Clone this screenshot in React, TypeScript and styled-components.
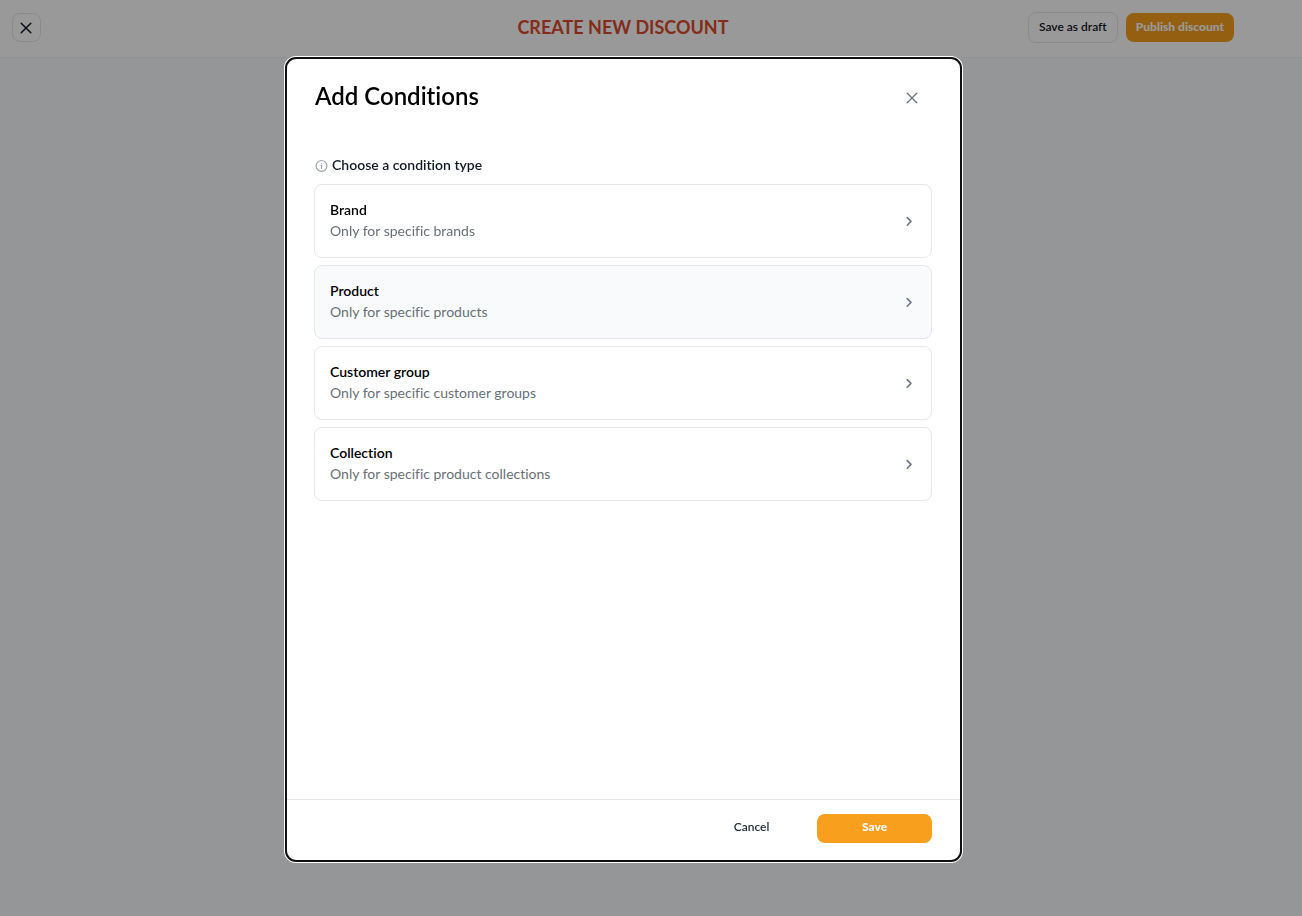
import React from "react";
import styled, { createGlobalStyle } from "styled-components";

const GlobalStyle = createGlobalStyle`
  *, *::before, *::after { box-sizing: border-box; }
  body {
    margin: 0;
    background: #f9fafe;
    color: #111827;
    font-family: Lato, "Noto Sans", sans-serif;
    font-variant-ligatures: no-common-ligatures;
  }
  h1, h2, h3, p, ul { margin: 0; padding: 0; }
  button { font-family: inherit; font-variant-ligatures: inherit; cursor: pointer; }
`;

const Page = styled.div`
  min-height: 100vh;
  background: #f9fafe;
`;

const TopBar = styled.header`
  display: grid;
  grid-template-columns: 1fr auto 1fr;
  align-items: center;
  height: 58px;
  padding: 0 68px 3px 12px;
  background: #ffffff;
  border-bottom: 1px solid #f0f0fa;
`;

const PageTitle = styled.h1`
  color: #dc4a2c;
  font-size: 18px;
  line-height: 24px;
  font-weight: 700;
`;

const Actions = styled.div`
  display: flex;
  align-items: center;
  justify-content: flex-end;
  gap: 8px;
`;

const Button = styled.button<{ $kind: "outline" | "primary" | "ghost"; $width?: number }>`
  height: ${({ $kind }) => ($kind === "outline" ? 31 : 29)}px;
  width: ${({ $width }) => ($width ? `${$width}px` : "auto")};
  padding: ${({ $width }) => ($width ? "0 10px 3px" : "0 10px 1px")};
  border: ${({ $kind }) => ($kind === "outline" ? "1px solid #e5e7eb" : "0")};
  border-radius: 8px;
  background: ${({ $kind }) => ($kind === "primary" ? "#f89f1e" : "transparent")};
  color: ${({ $kind }) => ($kind === "primary" ? "#ffffff" : $kind === "ghost" ? "#1f2937" : "#111827")};
  font-size: 12px;
  line-height: 16px;
  font-weight: ${({ $kind }) => ($kind === "primary" ? 900 : 600)};
  white-space: nowrap;
`;

const SquareButton = styled.button`
  display: flex;
  align-items: center;
  justify-content: center;
  width: 29px;
  height: 29px;
  padding: 1px 1px 0 0;
  border: 1px solid #e5e7eb;
  border-radius: 8px;
  background: transparent;
  color: #111827;
`;

const Overlay = styled.div`
  position: fixed;
  inset: 0;
  display: flex;
  justify-content: center;
  padding: 58px 55px 55px 0;
  background: rgba(0, 0, 0, 0.4);
`;

const Dialog = styled.section`
  display: flex;
  flex-direction: column;
  width: 100%;
  max-width: 675px;
  border-radius: 10px;
  background: #ffffff;
  outline: 2px solid #101010;
  outline-offset: -1px;
  box-shadow: 0 0 0 2px #ffffff;
`;

const DialogHeader = styled.div`
  display: flex;
  justify-content: space-between;
  align-items: flex-start;
  padding: 22px 43px 0 29px;
`;

const DialogTitle = styled.h2`
  color: #000000;
  font-size: 24px;
  line-height: 32px;
  font-weight: 600;
`;

const IconButton = styled.button`
  display: flex;
  margin-top: 12px;
  padding: 0;
  border: 0;
  background: transparent;
  color: #6b7280;
`;

const DialogBody = styled.div`
  flex: 1;
  overflow-y: auto;
  padding: 41px 29px 0 28px;
`;

const SectionLabel = styled.h3`
  display: flex;
  align-items: center;
  gap: 4px;
  padding-left: 1px;
  font-size: 14px;
  line-height: 24px;
  font-weight: 600;
`;

const ConditionList = styled.ul`
  display: flex;
  flex-direction: column;
  gap: 7px;
  margin-top: 7px;
  list-style: none;
`;

const ConditionCard = styled.button<{ $active?: boolean }>`
  display: flex;
  align-items: center;
  justify-content: space-between;
  width: 100%;
  height: 74px;
  padding: 0 16px 0 15px;
  border: 1px solid #e5e7eb;
  border-radius: 8px;
  background: ${({ $active }) => ($active ? "#f9fafb" : "#ffffff")};
  color: #6b7280;
  text-align: left;
`;

const CardText = styled.span`
  display: flex;
  flex-direction: column;
  padding-bottom: 2px;
  font-size: 14px;
  line-height: 21px;
`;

const CardTitle = styled.span`
  color: #000000;
  font-weight: 600;
`;

const CardDetail = styled.span`
  color: #687076;
`;

const DialogFooter = styled.footer`
  display: flex;
  align-items: center;
  justify-content: flex-end;
  gap: 8px;
  height: 62px;
  padding: 0 29px 4px 28px;
  border-top: 1px solid #e5e7eb;
`;

const Cross = ({ size, stroke }: { size: number; stroke: number }) => (
  <svg width={size} height={size} viewBox="0 0 12 12" fill="none" stroke="currentColor" strokeWidth={stroke} strokeLinecap="round" aria-hidden="true">
    <path d="M1.2 1.2L10.8 10.8M10.8 1.2L1.2 10.8" />
  </svg>
);

const Chevron = () => (
  <svg width="12" height="12" viewBox="0 0 12 12" fill="none" stroke="currentColor" strokeWidth="1.5" strokeLinecap="round" strokeLinejoin="round" aria-hidden="true">
    <path d="M4.2 2.6L8 6.4L4.2 10.2" />
  </svg>
);

const Info = () => (
  <svg width="13" height="13" viewBox="0 0 13 13" fill="none" stroke="#9ca3af" strokeWidth="1.2" strokeLinecap="round" aria-hidden="true">
    <circle cx="6.5" cy="6.9" r="5.4" />
    <path d="M6 6.4H6.5V9.4M6.5 4.3V4.4" />
  </svg>
);

const conditions = [
  { title: "Brand", detail: "Only for specific brands" },
  { title: "Product", detail: "Only for specific products", active: true },
  { title: "Customer group", detail: "Only for specific customer groups" },
  { title: "Collection", detail: "Only for specific product collections" },
];

export default function App() {
  return (
    <>
      <GlobalStyle />
      <Page>
        <TopBar>
          <SquareButton type="button" aria-label="Close page">
            <Cross size={12} stroke={1.5} />
          </SquareButton>
          <PageTitle>CREATE NEW DISCOUNT</PageTitle>
          <Actions>
            <Button type="button" $kind="outline">Save as draft</Button>
            <Button type="button" $kind="primary">Publish discount</Button>
          </Actions>
        </TopBar>
      </Page>
      <Overlay>
        <Dialog role="dialog" aria-modal="true" aria-labelledby="dialog-title">
          <DialogHeader>
            <DialogTitle id="dialog-title">Add Conditions</DialogTitle>
            <IconButton type="button" aria-label="Close dialog">
              <Cross size={12} stroke={1.3} />
            </IconButton>
          </DialogHeader>
          <DialogBody>
            <SectionLabel>
              <Info />
              Choose a condition type
            </SectionLabel>
            <ConditionList>
              {conditions.map((c) => (
                <li key={c.title}>
                  <ConditionCard type="button" $active={c.active}>
                    <CardText>
                      <CardTitle>{c.title}</CardTitle>
                      <CardDetail>{c.detail}</CardDetail>
                    </CardText>
                    <Chevron />
                  </ConditionCard>
                </li>
              ))}
            </ConditionList>
          </DialogBody>
          <DialogFooter>
            <Button type="button" $kind="ghost" $width={115}>Cancel</Button>
            <Button type="button" $kind="primary" $width={115}>Save</Button>
          </DialogFooter>
        </Dialog>
      </Overlay>
    </>
  );
}
